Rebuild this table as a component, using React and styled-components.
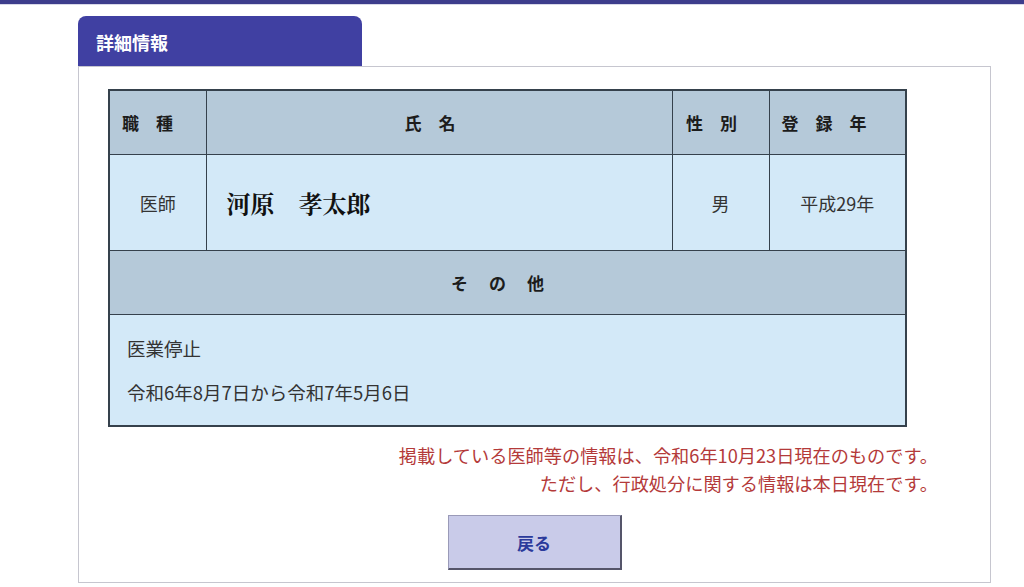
import styled, { createGlobalStyle } from 'styled-components';

const GlobalStyle = createGlobalStyle`
  body {
    margin: 0;
    background: #fff;
    font-family: "Noto Sans CJK JP", "Noto Sans", sans-serif;
    color: #222;
  }
`;

const TopBar = styled.div`
  height: 4px;
  background: #3d3d8c;
  border-bottom: 1px solid #d8d8e8;
`;

const Page = styled.div`
  padding: 11px 0 0 78px;
`;

const Tab = styled.div`
  width: 284px;
  height: 50px;
  box-sizing: border-box;
  background: #4040a2;
  border-radius: 8px 8px 0 0;
  color: #fff;
  font-size: 18px;
  font-weight: 700;
  line-height: 26px;
  padding: 13px 0 0 18px;
`;

const Panel = styled.div`
  width: 913px;
  box-sizing: border-box;
  border: 1px solid #c6c6cf;
  padding: 22px 0 12px 29px;
`;

const Table = styled.table`
  width: 797px;
  border-collapse: collapse;
  border: 2px solid #35414c;
  table-layout: fixed;
`;

const Head = styled.th`
  height: 63px;
  background: #b5c9d9;
  border: 1px solid #35414c;
  font-size: 17px;
  font-weight: 700;
  color: #1c1c1c;
  text-align: ${(p) => p.$align || 'center'};
  padding: ${(p) => (p.$align === 'left' ? '0 0 0 12px' : '0 18px 0 0')};
  letter-spacing: ${(p) => p.$spread || '0'};
  white-space: pre;
`;

const Cell = styled.td`
  height: 93px;
  background: #d3e9f8;
  border: 1px solid #35414c;
  font-size: 18px;
  text-align: center;
  color: #333;
`;

const NameCell = styled(Cell)`
  text-align: left;
  padding-left: 20px;
  font-family: "Noto Serif CJK JP", "Noto Sans CJK JP", serif;
  font-size: 24px;
  font-weight: 700;
  color: #111;
`;

const Note = styled.td`
  background: #d3e9f8;
  border: 1px solid #35414c;
  padding: 11px 0 11px 17px;
  font-size: 18.5px;
  line-height: 44px;
  color: #333;
`;

const Notice = styled.div`
  margin: 14px 52px 0 0;
  text-align: right;
  font-size: 18.2px;
  line-height: 28px;
  color: #b43a3a;
`;

const Actions = styled.div`
  display: flex;
  justify-content: center;
  margin: 18px 0 0 -29px;
`;

const BackButton = styled.button`
  width: 174px;
  height: 55px;
  background: #c9cbe9;
  border: 1px solid #9a9ab8;
  border-right: 2px solid #55556a;
  border-bottom: 2px solid #55556a;
  font-family: "Noto Sans CJK JP", sans-serif;
  font-size: 17px;
  font-weight: 700;
  color: #2b3a9b;
  cursor: pointer;
`;

export default function App() {
  return (
    <>
      <GlobalStyle />
      <TopBar />
      <Page>
        <Tab>詳細情報</Tab>
        <Panel>
          <Table>
            <colgroup>
              <col style={{ width: 97 }} />
              <col style={{ width: 466 }} />
              <col style={{ width: 97 }} />
              <col style={{ width: 137 }} />
            </colgroup>
            <tbody>
              <tr>
                <Head $align="left">職　種</Head>
                <Head>氏　名</Head>
                <Head>性　別</Head>
                <Head $align="left">登　録　年</Head>
              </tr>
              <tr>
                <Cell>医師</Cell>
                <NameCell>河原　孝太郎</NameCell>
                <Cell>男</Cell>
                <Cell>平成29年</Cell>
              </tr>
              <tr>
                <Head colSpan={4} $spread="2px">そ　の　他</Head>
              </tr>
              <tr>
                <Note colSpan={4}>
                  医業停止
                  <br />
                  令和6年8月7日から令和7年5月6日
                </Note>
              </tr>
            </tbody>
          </Table>
          <Notice>
            掲載している医師等の情報は、令和6年10月23日現在のものです。
            <br />
            ただし、行政処分に関する情報は本日現在です。
          </Notice>
          <Actions>
            <BackButton>戻る</BackButton>
          </Actions>
        </Panel>
      </Page>
    </>
  );
}
